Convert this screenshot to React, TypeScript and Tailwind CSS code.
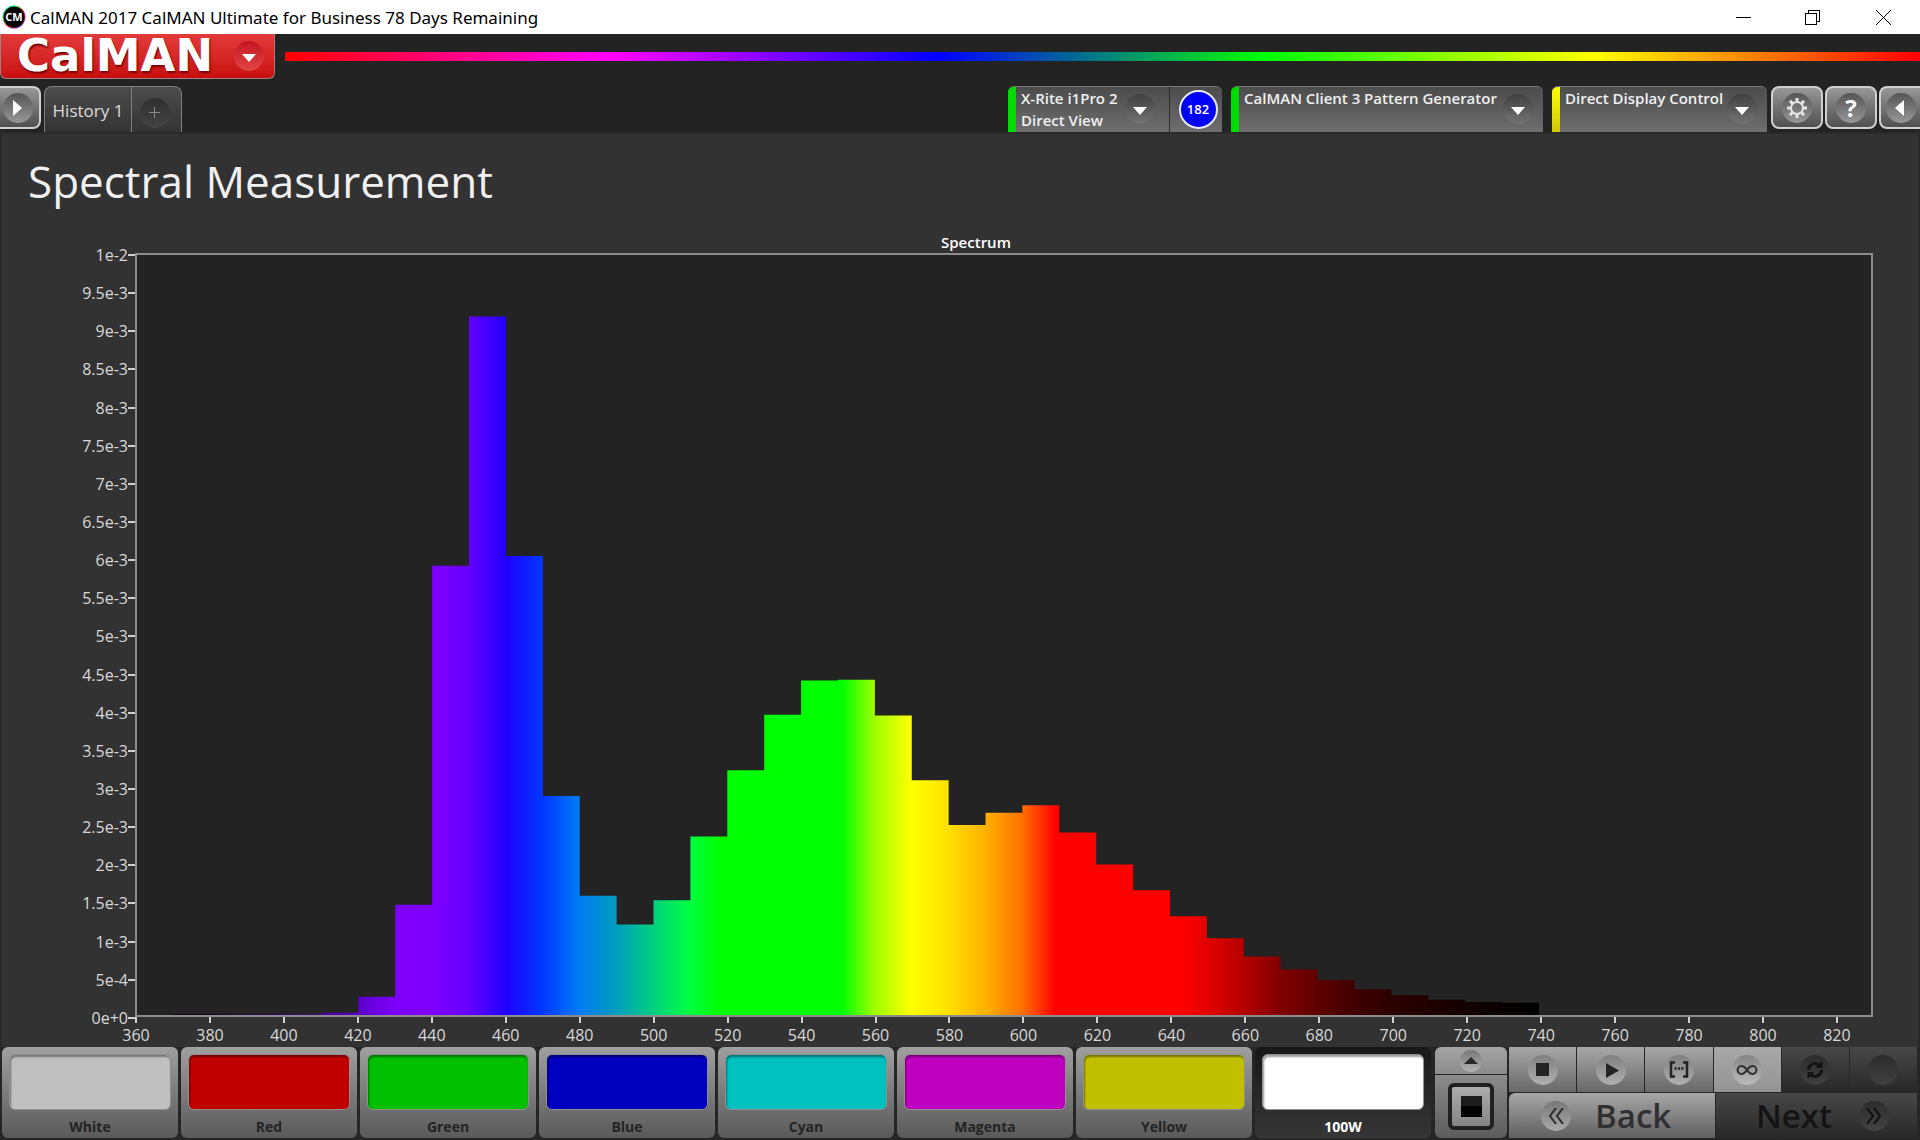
import React, { useState } from "react";

// [wavelength in nm, power in 1e-3], one entry for each 10 nm band
const bands: [number, number][] = [
  [370, 0.01], [380, 0.01], [390, 0.01], [400, 0.01], [410, 0.03],
  [420, 0.24], [430, 1.45], [440, 5.91], [450, 9.19], [460, 6.04],
  [470, 2.88], [480, 1.57], [490, 1.19], [500, 1.51], [510, 2.35],
  [520, 3.22], [530, 3.95], [540, 4.4], [550, 4.41], [560, 3.94],
  [570, 3.09], [580, 2.5], [590, 2.66], [600, 2.76], [610, 2.4],
  [620, 1.98], [630, 1.64], [640, 1.3], [650, 1.01], [660, 0.77],
  [670, 0.6], [680, 0.46], [690, 0.34], [700, 0.26], [710, 0.2],
  [720, 0.17], [730, 0.16],
];

const stops: [number, string][] = [
  [380, "#100020"], [400, "#3a0080"], [410, "#4c00a0"], [420, "#5c00cc"],
  [430, "#7d00fa"], [440, "#8000ff"], [450, "#6400ff"], [460, "#2000ff"],
  [470, "#0038ff"], [480, "#007cf2"], [490, "#009ebc"], [500, "#00d080"],
  [510, "#00ff40"], [518, "#00ff00"], [551, "#00ff00"], [560, "#a0ff00"],
  [570, "#ffff00"], [580, "#ffe000"], [590, "#ffb000"], [600, "#ff7000"],
  [609, "#ff0000"], [642, "#ff0000"], [650, "#e40000"], [660, "#b40000"],
  [670, "#800000"], [680, "#600000"], [690, "#400000"], [700, "#2c0000"],
  [720, "#140000"], [740, "#000000"],
];

const powerLabels = [
  "1e-2", "9.5e-3", "9e-3", "8.5e-3", "8e-3", "7.5e-3", "7e-3", "6.5e-3",
  "6e-3", "5.5e-3", "5e-3", "4.5e-3", "4e-3", "3.5e-3", "3e-3", "2.5e-3",
  "2e-3", "1.5e-3", "1e-3", "5e-4", "0e+0",
];

const wavelengths = Array.from({ length: 24 }, (_, i) => 360 + i * 20);

const patches = [
  { name: "White", color: "bg-[#c0c0c0]" },
  { name: "Red", color: "bg-[#c00000]" },
  { name: "Green", color: "bg-[#00c000]" },
  { name: "Blue", color: "bg-[#0000c0]" },
  { name: "Cyan", color: "bg-[#00c0c0]" },
  { name: "Magenta", color: "bg-[#c000c0]" },
  { name: "Yellow", color: "bg-[#c0c000]" },
  { name: "100W", color: "bg-white" },
];

const TitleBar: React.FC = () => (
  <div className="flex h-[34px] items-center bg-white text-black">
    <svg width="24" height="24" viewBox="0 0 24 24" className="ml-0.5 mr-1" aria-hidden="true">
      <defs>
        <linearGradient id="ring" x1="0" y1="0" x2="1" y2="1">
          <stop offset="0" stopColor="#00e0ff" />
          <stop offset="0.3" stopColor="#20ff40" />
          <stop offset="0.55" stopColor="#ff3030" />
          <stop offset="1" stopColor="#4020ff" />
        </linearGradient>
      </defs>
      <circle cx="12" cy="12" r="11.5" fill="url(#ring)" />
      <circle cx="12" cy="12" r="10.5" fill="#000" />
      <text x="12" y="16" textAnchor="middle" fontSize="11" fontWeight="700" fill="#fff">CM</text>
    </svg>
    <span className="flex-1 pt-px font-['Noto_Sans',sans-serif] text-[17px]">
      CalMAN 2017 CalMAN Ultimate for Business 78 Days Remaining
    </span>
    <button aria-label="Minimize" className="flex h-full w-[69px] items-center justify-center">
      <svg width="15" height="15" viewBox="0 0 15 15" shapeRendering="crispEdges"><path d="M0 7.5h15" stroke="#000" /></svg>
    </button>
    <button aria-label="Restore" className="flex h-full w-[69px] items-center justify-center">
      <svg width="15" height="15" viewBox="0 0 15 15" fill="none" stroke="#000" shapeRendering="crispEdges">
        <path d="M.5 3.5h11v11h-11zM3.5 3.5v-3h11v11h-3" />
      </svg>
    </button>
    <button aria-label="Close" className="flex h-full w-[73px] items-center justify-center">
      <svg width="15" height="15" viewBox="0 0 15 15" stroke="#000"><path d="M0 0l15 15M15 0L0 15" /></svg>
    </button>
  </div>
);

const DropCircle: React.FC = () => (
  <span className="flex size-[30px] shrink-0 items-center justify-center rounded-full bg-linear-to-b from-[#404040] to-[#747474]">
    <svg width="14" height="8" viewBox="0 0 14 8" className="mt-1"><path d="M0 0h14L7 8z" fill="#fff" /></svg>
  </span>
);

const Device: React.FC<{ lines: string[]; bar: string; size: string; count?: number }> = ({ lines, bar, size, count }) => (
  <div className={`flex h-[46px] overflow-hidden rounded-t-md border-t border-[#777] bg-linear-to-b from-[#4c4c4c] to-[#6e6e6e] ${size}`}>
    <span className={`w-2 shrink-0 ${bar}`} />
    <button className="flex flex-1 items-start justify-between pl-[5px] pr-2.5 text-left text-[15px] leading-[22px] font-semibold whitespace-nowrap text-[#f0f0f0]">
      <span>{lines.map((line) => <span key={line} className="block">{line}</span>)}</span>
      <span className="pt-[7px]"><DropCircle /></span>
    </button>
    {count !== undefined && (
      <div className="ml-1 flex w-[53px] items-start justify-center border-l border-[#2c2c2c] pt-[3px] pl-1">
        <span className="flex size-[39px] items-center justify-center rounded-full border-2 border-[#e8e8ff] bg-[#0000fa] text-[13px] font-semibold text-white">{count}</span>
      </div>
    )}
  </div>
);

const ToolButton: React.FC<{ label: string; shape: string; children: React.ReactNode }> = ({ label, shape, children }) => (
  <button aria-label={label} className={`flex h-[43px] items-center justify-center border-2 border-[#d0d0d0] bg-linear-to-b from-[#989898] to-[#505050] ${shape}`}>
    <span className="flex size-[30px] items-center justify-center rounded-full bg-linear-to-b from-[#555] to-[#999]">{children}</span>
  </button>
);

const Header: React.FC = () => (
  <header className="bg-[#232323]">
    <div className="flex items-start">
      <button className="flex h-[45px] w-[275px] items-center justify-between rounded-b-md border border-t-0 border-[#a08080] bg-linear-to-b from-[#e33a3a] to-[#c80c0c] pr-2.5 pl-4">
        <span className="font-['DejaVu_Sans',sans-serif] text-[45px] leading-[44px] font-bold text-white [text-shadow:1px_2px_2px_#700]">CalMAN</span>
        <span className="flex size-[30px] items-center justify-center rounded-full bg-linear-to-b from-[#c41020] to-[#e24444]">
          <svg width="14" height="8" viewBox="0 0 14 8" className="mt-1"><path d="M0 0h14L7 8z" fill="#fff" /></svg>
        </span>
      </button>
      <div className="mt-[18px] ml-2.5 h-[9px] flex-1 bg-[linear-gradient(to_right,#f00,#f0f_20%,#00f_40%,#0f0_60%,#ff0_80%,#f00)]" />
    </div>
    <div className="flex h-[53px] items-start pt-[7px]">
      <ToolButton label="Expand left panel" shape="w-[41px] rounded-r-lg border-l-0 pr-1">
        <svg width="9" height="16" viewBox="0 0 9 16"><path d="M0 0v16l9-8z" fill="#fff" /></svg>
      </ToolButton>
      <nav className="ml-[3px] flex h-[46px] rounded-t-lg border border-b-0 border-[#808080] bg-linear-to-b from-[#4c4c4c] to-[#343434]">
        <button className="w-[86px] pt-0.5 text-[17px] whitespace-nowrap text-[#dcdcdc]">History 1</button>
        <button aria-label="Add history" className="flex w-[50px] items-center justify-center border-l border-[#808080] pt-1.5 pr-1">
          <span className="flex size-[30px] items-center justify-center rounded-full bg-linear-to-b from-[#303030] to-[#444]">
            <svg width="11" height="11" viewBox="0 0 11 11"><path d="M5.500 0v11M0 5.500h11" stroke="#888" /></svg>
          </span>
        </button>
      </nav>
      <div className="ml-auto flex items-start">
        <div className="mr-1 flex items-start gap-[9px]">
          <Device lines={["X-Rite i1Pro 2", "Direct View"]} bar="bg-[#00dc00]" size="w-[214px]" count={182} />
          <Device lines={["CalMAN Client 3 Pattern Generator"]} bar="bg-[#00dc00]" size="w-[312px]" />
          <Device lines={["Direct Display Control"]} bar="bg-linear-to-b from-[#ffff00] to-[#d0c800]" size="w-[215px]" />
        </div>
        <div className="flex gap-0.5">
          <ToolButton label="Settings" shape="w-[52px] rounded-lg">
            <svg width="20" height="20" viewBox="0 0 20 20" fill="none" stroke="#e4e4e4">
              <circle cx="10" cy="10" r="6" strokeWidth="2" />
              <path d="M10 0v4M10 16v4M0 10h4M16 10h4M2.900 2.900l2.900 2.900M14.200 14.200l2.900 2.900M17.100 2.900l-2.900 2.900M5.800 14.200l-2.900 2.900" strokeWidth="3" />
            </svg>
          </ToolButton>
          <ToolButton label="Help" shape="w-[52px] rounded-lg">
            <span className="text-[24px] font-bold text-white">?</span>
          </ToolButton>
          <ToolButton label="Expand right panel" shape="w-[41px] rounded-l-lg border-r-0">
            <svg width="9" height="16" viewBox="0 0 9 16" className="mr-0.5"><path d="M9 0v16L0 8z" fill="#fff" /></svg>
          </ToolButton>
        </div>
      </div>
    </div>
  </header>
);

const SpectrumChart: React.FC = () => {
  const outline = bands.map(([nm, power]) => `V${10 - power}H${nm + 10}`).join("");

  return (
    <section className="flex min-h-0 flex-1 flex-col pr-[45px] pl-[77px] text-[16px] text-[#d8d8d8]">
      <h2 className="text-center text-[15px] leading-5 font-semibold text-white">Spectrum</h2>
      <div className="flex min-h-0 flex-1 pt-px">
        <div className="-mb-0.5 flex w-14 flex-col justify-between pt-px">
          {powerLabels.map((label) => (
            <div key={label} className="flex h-0.5 items-center justify-end">
              <span className="leading-none">{label}</span>
              <span className="h-0.5 w-[7px] bg-[#d0d0d0]" />
            </div>
          ))}
        </div>
        <div className="min-w-0 flex-1 border-2 border-[#8c8c8c] bg-[#232323]">
          <svg width="100%" height="100%" viewBox="360 0 470 10" preserveAspectRatio="none" className="block h-full w-full">
            <defs>
              <linearGradient id="spectrum" gradientUnits="userSpaceOnUse" x1="360" y1="0" x2="830" y2="0">
                {stops.map(([nm, color]) => (
                  <stop key={nm} offset={(nm - 360) / 470} stopColor={color} />
                ))}
              </linearGradient>
            </defs>
            <path d={`M370 10${outline}V10z`} fill="url(#spectrum)" />
          </svg>
        </div>
      </div>
      <div className="flex h-[30px] pl-14">
        {wavelengths.map((nm) => (
          <div key={nm} className={nm === 820 ? "w-0 flex-1" : "w-0 flex-2"}>
            <div className="flex w-0.5 flex-col items-center">
              <span className="h-1.5 w-0.5 bg-[#d0d0d0]" />
              <span className="leading-6">{nm}</span>
            </div>
          </div>
        ))}
      </div>
    </section>
  );
};

const stripTones = {
  idle: { button: "from-[#a8a8a8] to-[#686868]", circle: "from-[#808080] to-[#b0b0b0]" },
  active: { button: "from-[#a8a8a8] to-[#949494]", circle: "from-[#858585] to-[#bcbcbc]" },
  off: { button: "from-[#484848] to-[#282828]", circle: "from-[#2c2c2c] to-[#404040]" },
};

const StripButton: React.FC<{ label: string; tone?: keyof typeof stripTones; children?: React.ReactNode }> = ({ label, tone = "idle", children }) => (
  <button
    aria-label={label}
    disabled={tone === "off"}
    className={`flex flex-1 items-center justify-center bg-linear-to-b ${stripTones[tone].button}`}
  >
    <span className={`flex size-[30px] items-center justify-center rounded-full bg-linear-to-b ${stripTones[tone].circle}`}>
      {children}
    </span>
  </button>
);

const Controls: React.FC = () => (
  <div className="flex w-[482px] shrink-0 gap-0.5">
    <div className="flex w-[72px] flex-col gap-px overflow-hidden rounded-md">
      <button aria-label="Show more" className="flex h-[27px] items-center justify-center bg-linear-to-b from-[#a4a4a4] to-[#8c8c8c]">
        <span className="flex size-[22px] items-center justify-center rounded-full bg-linear-to-b from-[#777] to-[#b4b4b4]">
          <svg width="14" height="7" viewBox="0 0 14 7"><path d="M0 7h14L7 0z" fill="#282828" /></svg>
        </span>
      </button>
      <button aria-label="Pattern window" className="flex flex-1 items-center justify-center bg-linear-to-b from-[#8c8c8c] to-[#5c5c5c]">
        <span className="flex h-[47px] w-[46px] items-center justify-center rounded-md border-4 border-[#202020] bg-linear-to-b from-[#acacac] to-[#848484]">
          <span className="size-[21px] bg-linear-to-b from-[#1c1c1c] from-50% to-black to-50%" />
        </span>
      </button>
    </div>
    <div className="flex flex-1 flex-col gap-px">
      <div className="flex h-[45px] gap-px">
        <StripButton label="Stop">
          <svg width="13" height="13" viewBox="0 0 13 13"><path d="M0 0h13v13H0z" fill="#242424" /></svg>
        </StripButton>
        <StripButton label="Read">
          <svg width="13" height="15" viewBox="0 0 13 15" className="mt-0.5 ml-1"><path d="M0 0v15l13-7.500z" fill="#242424" /></svg>
        </StripButton>
        <StripButton label="Read series">
          <svg width="20" height="17" viewBox="0 0 20 17" fill="none" stroke="#242424">
            <path d="M6 1.500H2v14h4M14 1.500h4v14h-4" strokeWidth="2.500" />
            <path d="M5.500 7.500h2.200M8.900 7.500h2.200M12.300 7.500h2.200" strokeWidth="2.500" />
          </svg>
        </StripButton>
        <StripButton label="Read continuously" tone="active">
          <svg width="22" height="12" viewBox="0 0 22 12" fill="none" stroke="#333" strokeWidth="2.200">
            <path d="M11 6C9 3 7.500 2 5.600 2a4 4 0 000 8C7.500 10 9 9 11 6s3.500-4 5.400-4a4 4 0 010 8C14.500 10 13 9 11 6z" />
          </svg>
        </StripButton>
        <StripButton label="Refresh" tone="off">
          <svg width="18" height="18" viewBox="0 0 18 18" fill="none" stroke="#141414" strokeWidth="3">
            <path d="M2.500 9A6.500 6.500 0 0113 4M15.500 9A6.500 6.500 0 015 14" />
            <path d="M16.500 0v7h-7zM1.500 18v-7h7z" fill="#141414" stroke="none" />
          </svg>
        </StripButton>
        <StripButton label="Record" tone="off" />
      </div>
      <div className="flex flex-1 gap-px text-[33px] leading-none font-semibold">
        <button className="flex flex-1 items-center gap-6 rounded-tl-md bg-linear-to-b from-[#a8a8a8] to-[#606060] pl-8 text-[#303030]">
          <span className="flex size-[30px] items-center justify-center rounded-full bg-linear-to-b from-[#777] to-[#aaa]">
            <svg width="16" height="16" viewBox="0 0 16 16" fill="none" stroke="#2c2c2c" strokeWidth="2"><path d="M8 0L2 8l6 8M15 0L9 8l6 8" /></svg>
          </span>
          Back
        </button>
        <button disabled className="flex flex-1 items-center justify-end gap-[27px] bg-linear-to-b from-[#484848] to-[#282828] pr-7 text-[#141414]">
          Next
          <span className="flex size-[30px] items-center justify-center rounded-full bg-linear-to-b from-[#2c2c2c] to-[#444]">
            <svg width="16" height="16" viewBox="0 0 16 16" fill="none" stroke="#101010" strokeWidth="2"><path d="M1 0l6 8-6 8M8 0l6 8-6 8" /></svg>
          </span>
        </button>
      </div>
    </div>
  </div>
);

const App: React.FC = () => {
  const [selected, setSelected] = useState<string>("100W");

  return (
    <div className="flex h-screen min-h-[600px] flex-col bg-[#323232] font-['Open_Sans',sans-serif]">
      <TitleBar />
      <Header />
      <main className="flex min-h-0 flex-1 flex-col border-x-2 border-t-2 border-[#2a2a2a] bg-[#323232]">
        <h1 className="px-[26px] pt-4 pb-5 text-[44px] leading-[62px] text-[#f0f0f0]">Spectral Measurement</h1>
        <SpectrumChart />
      </main>
      <footer className="flex h-[93px] gap-1 bg-[#262626] pr-[3px] pb-[2px] pl-0.5">
        <div className="flex flex-1 gap-[3px]">
          {patches.map((patch) => (
            <button
              key={patch.name}
              onClick={() => setSelected(patch.name)}
              className={`flex flex-1 flex-col items-center rounded-md bg-linear-to-b px-[7px] pt-[7px] text-[14px] font-bold ${
                selected === patch.name ? "from-[#181818] to-[#363636] text-white" : "from-[#a0a0a0] to-[#5a5a5a] text-[#242424]"
              }`}
            >
              <span className={`h-[56px] w-full rounded-md border border-[#909090] shadow-[inset_1px_2px_2px_#0006] ${patch.color}`} />
              <span className="pt-[7px] leading-5">{patch.name}</span>
            </button>
          ))}
        </div>
        <Controls />
      </footer>
    </div>
  );
};

export default App;
